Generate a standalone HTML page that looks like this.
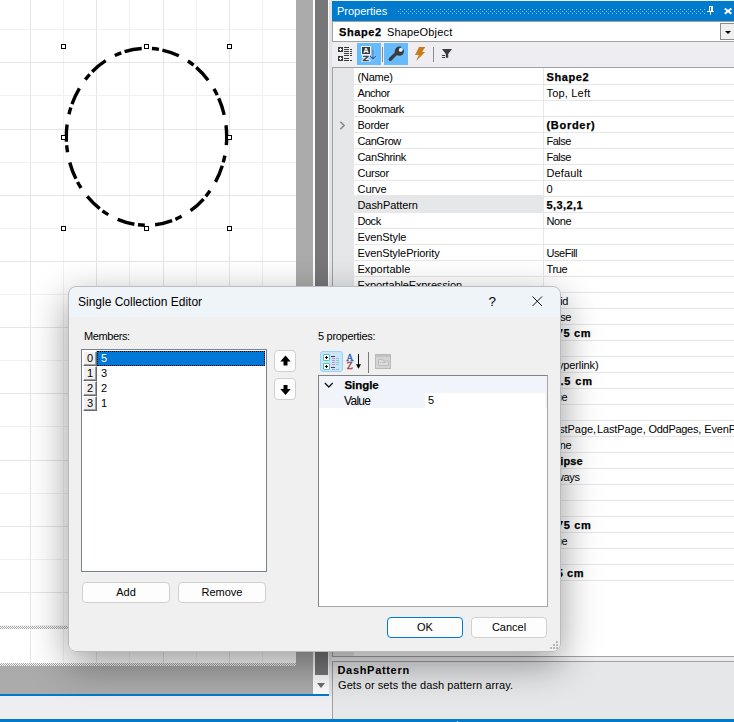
<!DOCTYPE html>
<html>
<head>
<meta charset="utf-8">
<title>Single Collection Editor</title>
<style>
html,body{margin:0;padding:0;}
body{width:734px;height:722px;overflow:hidden;position:relative;background:#eeeef2;font-family:"Liberation Sans",sans-serif;font-size:11px;color:#000;}
.abs{position:absolute;}
#page{left:0;top:0;width:296px;height:663px;background:#fff;overflow:hidden;}
#pageshadow{left:0;top:663px;width:296px;height:3px;background:#c9c9c9;}
#ws{left:0;top:0;width:313px;height:694px;background:#ababab;}
#vscroll{left:313px;top:0;width:16px;height:694px;background:#fcfcfc;}
#vstrip{left:329px;top:0;width:3px;height:696px;background:#e3e3e7;}
#vthumb{left:315px;top:0;width:13px;height:675px;background:#777779;}
#varrow{left:317px;top:683px;width:0;height:0;border-left:4.5px solid transparent;border-right:4.5px solid transparent;border-top:5px solid #6d6d6d;}
#blue1{left:0;top:694px;width:329px;height:2px;background:#007acc;}
#blue2{left:0;top:719px;width:734px;height:3px;background:#007acc;}
#status{left:0;top:696px;width:332px;height:23px;background:#eeeef2;}
/* properties */
#ptitle{left:332px;top:1px;width:402px;height:20px;background:#007acc;color:#fff;}
#ptitle span{position:absolute;left:5px;top:4px;line-height:13px;font-size:11px;}
#pcombo{left:332px;top:21px;width:403px;height:21px;background:#fff;border:1px solid #a0a0a0;box-sizing:border-box;}
#pcombo .t{position:absolute;left:6px;top:4px;line-height:13px;white-space:nowrap;}
#pdrop{left:387px;top:1px;width:15px;height:17px;background:#f0f0f0;border:1px solid #8c8c8c;box-sizing:border-box;}
#pdrop i{position:absolute;left:4px;top:7px;width:0;height:0;border-left:3px solid transparent;border-right:3px solid transparent;border-top:3.500px solid #000;}
#ptool{left:332px;top:42px;width:402px;height:25px;background:#eeeef2;}
.hl{position:absolute;top:1px;width:24px;height:22px;background:#66bbff;}
#pgrid{left:332px;top:67px;width:403px;height:590px;background:#fff;border:1px solid #a0a0a0;box-sizing:border-box;overflow:hidden;}
#gutter{left:0;top:0;width:21px;height:588px;background:#e6e7e8;}
.row{position:absolute;left:21px;width:400px;height:17px;border-bottom:1px solid #e6e7e8;box-sizing:border-box;}
.row .l{position:absolute;left:3.500px;top:2.500px;line-height:13px;white-space:nowrap;letter-spacing:-0.35px;}
.row .v{position:absolute;left:192.500px;top:3px;line-height:13px;white-space:nowrap;letter-spacing:-0.35px;}
.row.sel .lb{position:absolute;left:0;top:-1px;width:189px;height:17px;background:#e6e7e8;}
.b,b{font-weight:bold;-webkit-text-stroke:0.25px #000;}
#split{left:210px;top:0;width:1px;height:512px;background:#e6e7e8;}
#pdesc{left:332px;top:661px;width:403px;height:59px;background:#e6e7e8;border:1px solid #a0a0a0;box-sizing:border-box;}
#pdesc .h{position:absolute;left:4.500px;top:2px;letter-spacing:0.68px;line-height:13px;font-weight:bold;white-space:nowrap;}
#pdesc .d{position:absolute;left:5px;top:17px;letter-spacing:0.08px;line-height:13px;white-space:nowrap;}
/* dialog */
#dlgshadow{left:68px;top:286px;width:493px;height:366px;border-radius:8px;box-shadow:0 12px 38px rgba(0,0,0,0.40);}
#dlg{left:68px;top:286px;width:493px;height:366px;background:#f0f0f0;border-radius:8px;overflow:hidden;}
#dtitle{left:0;top:0;width:493px;height:31px;background:#eff4f9;}
#dtitle span{position:absolute;left:10px;top:9px;font-size:12px;line-height:15px;white-space:nowrap;}
.btn{position:absolute;box-sizing:border-box;background:#fdfdfd;border:1px solid #d0d0d0;border-radius:4px;text-align:center;font-size:11px;line-height:19px;}
.lbl{position:absolute;line-height:13px;white-space:nowrap;}
#list{left:13px;top:63px;width:186px;height:223px;background:#fff;border:1px solid #7a808c;box-sizing:border-box;}
.ib{position:absolute;left:1px;width:14px;height:15px;box-sizing:border-box;background:#f0f0f0;border-top:1px solid #fff;border-left:1px solid #fff;border-right:1px solid #696969;border-bottom:1px solid #696969;}
.ib i{position:absolute;left:0;top:0;width:11px;height:12px;border-right:1px solid #a0a0a0;border-bottom:1px solid #a0a0a0;}
.ib span{position:absolute;left:0;top:0;width:12px;text-align:center;line-height:13px;font-style:normal;}
.it{position:absolute;left:19px;line-height:13px;}
#selrow{left:15px;top:1px;width:168px;height:15px;background:#0078d7;box-sizing:border-box;border:1px dotted #000;}
#dgrid{left:250px;top:89px;width:230px;height:232px;background:#fff;border:1px solid #a5a5a5;border-top-color:#828282;border-left-color:#828282;box-sizing:border-box;}
</style>
</head>
<body>
<div id="ws" class="abs"></div>
<div id="page" class="abs">
<svg id="pagesvg" width="296" height="663" style="position:absolute;left:0;top:0">
<rect x="30" y="0" width="1" height="663" fill="#e6e6e6"/>
<rect x="63" y="0" width="1" height="663" fill="#f1f1f1"/>
<rect x="96" y="0" width="1" height="663" fill="#e6e6e6"/>
<rect x="129" y="0" width="1" height="663" fill="#f1f1f1"/>
<rect x="163" y="0" width="1" height="663" fill="#e6e6e6"/>
<rect x="196" y="0" width="1" height="663" fill="#f1f1f1"/>
<rect x="229" y="0" width="1" height="663" fill="#e6e6e6"/>
<rect x="262" y="0" width="1" height="663" fill="#f1f1f1"/>
<rect x="0" y="29" width="296" height="1" fill="#f1f1f1"/>
<rect x="0" y="62" width="296" height="1" fill="#e6e6e6"/>
<rect x="0" y="95" width="296" height="1" fill="#f1f1f1"/>
<rect x="0" y="129" width="296" height="1" fill="#e6e6e6"/>
<rect x="0" y="162" width="296" height="1" fill="#f1f1f1"/>
<rect x="0" y="195" width="296" height="1" fill="#e6e6e6"/>
<rect x="0" y="228" width="296" height="1" fill="#f1f1f1"/>
<rect x="0" y="261" width="296" height="1" fill="#e6e6e6"/>
<rect x="0" y="294" width="296" height="1" fill="#f1f1f1"/>
<rect x="0" y="327" width="296" height="1" fill="#e6e6e6"/>
<rect x="0" y="360" width="296" height="1" fill="#f1f1f1"/>
<rect x="0" y="393" width="296" height="1" fill="#e6e6e6"/>
<rect x="0" y="426" width="296" height="1" fill="#f1f1f1"/>
<rect x="0" y="460" width="296" height="1" fill="#e6e6e6"/>
<rect x="0" y="493" width="296" height="1" fill="#f1f1f1"/>
<rect x="0" y="526" width="296" height="1" fill="#e6e6e6"/>
<rect x="0" y="559" width="296" height="1" fill="#f1f1f1"/>
<rect x="0" y="592" width="296" height="1" fill="#e6e6e6"/>
<rect x="0" y="625" width="296" height="1" fill="#f1f1f1"/>
<ellipse cx="146.5" cy="136.8" rx="80.2" ry="88.5" fill="none" stroke="#000" stroke-width="3.4" pathLength="151.79" stroke-dasharray="2.44 3 2 1 5 3 2 1 5 3 2 1 5 3 2 1 5 3 2 1 5 3 2 1 5 3 2 1 5 3 2 1 5 3 2 1 5 3 2 1 5 3 2 1 5 3 2 1 5 3 2 1 5 3 3.35 0"/>
<rect x="61.5" y="44.5" width="4" height="4" fill="#fff" stroke="#000" stroke-width="1"/>
<rect x="144.5" y="44.5" width="4" height="4" fill="#fff" stroke="#000" stroke-width="1"/>
<rect x="227.5" y="44.5" width="4" height="4" fill="#fff" stroke="#000" stroke-width="1"/>
<rect x="61.5" y="135.5" width="4" height="4" fill="#fff" stroke="#000" stroke-width="1"/>
<rect x="227.5" y="135.5" width="4" height="4" fill="#fff" stroke="#000" stroke-width="1"/>
<rect x="61.5" y="226.5" width="4" height="4" fill="#fff" stroke="#000" stroke-width="1"/>
<rect x="144.5" y="226.5" width="4" height="4" fill="#fff" stroke="#000" stroke-width="1"/>
<rect x="227.5" y="226.5" width="4" height="4" fill="#fff" stroke="#000" stroke-width="1"/>
</svg>
</div>
<svg class="abs" style="left:0;top:0" width="296" height="670"><defs><pattern id="chk" x="0" y="0" width="2" height="2" patternUnits="userSpaceOnUse"><rect width="2" height="2" fill="#fbfbfb"/><rect x="0" y="0" width="1" height="1" fill="#a9a9a9"/><rect x="1" y="1" width="1" height="1" fill="#a9a9a9"/></pattern></defs><rect x="0" y="626" width="296" height="3" fill="url(#chk)"/><rect x="0" y="663" width="296" height="3" fill="url(#chk)"/></svg>
<div id="vscroll" class="abs"></div>
<div id="vthumb" class="abs"></div>
<div id="vstrip" class="abs"></div>
<div id="varrow" class="abs"></div>
<div id="status" class="abs"></div>
<div id="blue1" class="abs"></div>

<div id="ptitle" class="abs"><span>Properties</span>
<svg class="abs" style="left:0;top:0" width="402" height="20">
<defs><pattern id="dots" x="0" y="0" width="4" height="4" patternUnits="userSpaceOnUse"><rect x="0" y="0" width="1" height="1" fill="#86c3ee"/><rect x="2" y="2" width="1" height="1" fill="#86c3ee"/></pattern></defs>
<rect x="66" y="8" width="307" height="5" fill="url(#dots)"/>
<!-- pin -->
<g fill="#fff"><rect x="377" y="5" width="1" height="6"/><rect x="377" y="5" width="4" height="1"/><rect x="379" y="5" width="2" height="6"/><rect x="375" y="10" width="7" height="1"/><rect x="378" y="11" width="1" height="3"/></g>
<!-- close -->
<path d="M392.8 7.400l6.600 5.400M399.400 7.400l-6.600 5.400" stroke="#fff" stroke-width="1.900" fill="none"/>
</svg>
</div>
<div id="pcombo" class="abs"><span class="t"><b style="letter-spacing:0.6px">Shape2</b><span style="position:absolute;left:48px;top:0;letter-spacing:0.16px">ShapeObject</span></span><div id="pdrop" class="abs"><i></i></div></div>
<div id="ptool" class="abs">
<div class="hl" style="left:25px"></div>
<div class="hl" style="left:52px"></div>
<svg class="abs" style="left:0;top:0" width="402" height="25">
<!-- categorized icon -->
<g fill="#3b3b3b">
<rect x="6" y="5" width="5" height="5"/><rect x="6" y="14" width="5" height="5"/>
<rect x="12" y="5" width="5" height="1"/><rect x="12" y="7" width="5" height="1"/><rect x="12" y="9" width="5" height="1"/><rect x="12" y="11" width="5" height="1"/><rect x="12" y="13" width="5" height="1"/><rect x="12" y="16" width="5" height="1"/><rect x="12" y="18" width="5" height="1"/>
<rect x="18" y="7" width="2" height="1"/><rect x="18" y="9" width="2" height="1"/><rect x="18" y="11" width="2" height="1"/><rect x="18" y="13" width="2" height="1"/><rect x="18" y="18" width="2" height="1"/>
</g>
<g fill="#fff"><rect x="8" y="6" width="1" height="3"/><rect x="7" y="7" width="3" height="1"/><rect x="8" y="15" width="1" height="3"/><rect x="7" y="16" width="3" height="1"/></g>
<!-- AZ icon -->
<rect x="29" y="4" width="10" height="9" fill="#fff" opacity="0.85"/><rect x="30" y="5" width="8" height="7" fill="#3b3b3b"/>
<text x="34" y="11" font-size="7.500" font-weight="bold" fill="#fff" text-anchor="middle" font-family="Liberation Sans, sans-serif">A</text>
<text x="30.500" y="19" font-size="7.500" font-weight="bold" fill="none" stroke="#fff" stroke-opacity="0.85" stroke-width="2" textLength="6.500" lengthAdjust="spacingAndGlyphs" font-family="Liberation Sans, sans-serif">Z</text>
<text x="30.500" y="19" font-size="7.500" font-weight="bold" fill="#3b3b3b" stroke="#3b3b3b" stroke-width="0.300" textLength="6.500" lengthAdjust="spacingAndGlyphs" font-family="Liberation Sans, sans-serif">Z</text>
<path d="M41 7.500v9.500M38 13.800l3 3.400l3-3.400" stroke="#fff" stroke-opacity="0.5" stroke-width="2.600" fill="none"/><path d="M41 7.500v9.500M38 13.800l3 3.400l3-3.400" stroke="#1f5cb0" stroke-width="1.100" fill="none"/>
<rect x="50" y="5" width="1" height="15" fill="#8a8a8a"/>
<!-- wrench -->
<path d="M58.300 17.300L66 9.600" stroke="#3b3b3b" stroke-width="3.400" stroke-linecap="round" fill="none"/>
<circle cx="67.400" cy="9.200" r="4.600" fill="#3b3b3b"/>
<path d="M68.800 7.800L73 3.600" stroke="#66bbff" stroke-width="3" fill="none"/>
<circle cx="68.700" cy="7.900" r="1.900" fill="#e4f3ff"/>
<!-- lightning -->
<path d="M87 5h6.300l-3.200 4.900h3l-9 9.200l2.700-6.200h-3.800z" fill="#c97d1a"/>
<rect x="101" y="5" width="1" height="15" fill="#8a8a8a"/>
<!-- filter -->
<path d="M110 7h10l-3.800 4.900v3.900h-2.400v-3.900z" fill="#3b3b3b"/>
<rect x="110" y="13" width="3" height="1" fill="#3b3b3b"/><rect x="110" y="15" width="3" height="1" fill="#3b3b3b"/>
</svg>
</div>
<div id="pgrid" class="abs">
<div id="gutter" class="abs"></div>
<div id="split" class="abs"></div>
<svg class="abs" style="left:6px;top:52px" width="8" height="12"><path d="M1.300 1.800L5.100 5.500L1.300 9.200" stroke="#868686" stroke-width="1.500" fill="none"/></svg>
<div class="row" style="top:0px"><span class="l" style="letter-spacing:-0.24px">(Name)</span><span class="v b" style="letter-spacing:0.58px">Shape2</span></div>
<div class="row" style="top:16px"><span class="l" style="letter-spacing:-0.46px">Anchor</span><span class="v" style="letter-spacing:0.19px">Top, Left</span></div>
<div class="row" style="top:32px"><span class="l" style="letter-spacing:-0.39px">Bookmark</span></div>
<div class="row" style="top:48px"><span class="l" style="letter-spacing:-0.28px">Border</span><span class="v b" style="letter-spacing:0.7px">(Border)</span></div>
<div class="row" style="top:64px"><span class="l" style="letter-spacing:-0.45px">CanGrow</span><span class="v" style="letter-spacing:-0.53px">False</span></div>
<div class="row" style="top:80px"><span class="l" style="letter-spacing:-0.33px">CanShrink</span><span class="v" style="letter-spacing:-0.53px">False</span></div>
<div class="row" style="top:96px"><span class="l" style="letter-spacing:-0.28px">Cursor</span><span class="v" style="letter-spacing:0.13px">Default</span></div>
<div class="row" style="top:112px"><span class="l" style="letter-spacing:-0.05px">Curve</span><span class="v" style="letter-spacing:-0.2px">0</span></div>
<div class="row sel" style="top:128px"><div class="lb"></div><span class="l" style="letter-spacing:-0.07px">DashPattern</span><span class="v b" style="letter-spacing:0.42px">5,3,2,1</span></div>
<div class="row" style="top:144px"><span class="l" style="letter-spacing:-0.47px">Dock</span><span class="v" style="letter-spacing:-0.37px">None</span></div>
<div class="row" style="top:160px"><span class="l" style="letter-spacing:-0.08px">EvenStyle</span></div>
<div class="row" style="top:176px"><span class="l" style="letter-spacing:-0.1px">EvenStylePriority</span><span class="v" style="letter-spacing:-0.43px">UseFill</span></div>
<div class="row" style="top:192px"><span class="l" style="letter-spacing:0.02px">Exportable</span><span class="v" style="letter-spacing:-0.37px">True</span></div>
<div class="row" style="top:208px"><span class="l" style="letter-spacing:-0.13px">ExportableExpression</span></div>
<div class="row" style="top:224px"><span class="l" style="letter-spacing:-0.2px">Fill</span><span class="v" style="letter-spacing:-0.4px;margin-left:-1px">Solid</span></div>
<div class="row" style="top:240px"><span class="l" style="letter-spacing:-0.2px">GrowToBottom</span><span class="v" style="letter-spacing:-0.53px">False</span></div>
<div class="row" style="top:256px"><span class="l" style="letter-spacing:-0.2px">Height</span><span class="v b" style="letter-spacing:0.6px">2.75 cm</span></div>
<div class="row" style="top:272px"><span class="l" style="letter-spacing:-0.2px">HoverStyle</span></div>
<div class="row" style="top:288px"><span class="l" style="letter-spacing:-0.2px">Hyperlink</span><span class="v" style="letter-spacing:-0.11px">(Hyperlink)</span></div>
<div class="row" style="top:304px"><span class="l" style="letter-spacing:-0.2px">Left</span><span class="v b" style="letter-spacing:0.85px">12.5 cm</span></div>
<div class="row" style="top:320px"><span class="l" style="letter-spacing:-0.2px">Printable</span><span class="v" style="letter-spacing:-0.37px">True</span></div>
<div class="row" style="top:336px"><span class="l" style="letter-spacing:-0.2px">PrintableExpression</span></div>
<div class="row" style="top:352px"><span class="l" style="letter-spacing:-0.2px">PrintOn</span><span class="v" style="letter-spacing:-0.2px"><span style="letter-spacing:-0.06px">FirstPage,</span><span style="position:absolute;left:50.400px;top:0;letter-spacing:-0.09px">LastPage,</span><span style="position:absolute;left:102px;top:0;letter-spacing:-0.29px">OddPages,</span><span style="position:absolute;left:157.700px;top:0;letter-spacing:-0.1px">EvenPages, RepeatedBand, SinglePage</span></span></div>
<div class="row" style="top:368px"><span class="l" style="letter-spacing:-0.2px">Restrictions</span><span class="v" style="letter-spacing:-0.37px">None</span></div>
<div class="row" style="top:384px"><span class="l" style="letter-spacing:-0.2px">Shape</span><span class="v b" style="letter-spacing:0.13px">Ellipse</span></div>
<div class="row" style="top:400px"><span class="l" style="letter-spacing:-0.2px">ShiftMode</span><span class="v" style="letter-spacing:-0.28px">Always</span></div>
<div class="row" style="top:416px"><span class="l" style="letter-spacing:-0.2px">Style</span></div>
<div class="row" style="top:432px"><span class="l" style="letter-spacing:-0.2px">Tag</span></div>
<div class="row" style="top:448px"><span class="l" style="letter-spacing:-0.2px">Top</span><span class="v b" style="letter-spacing:0.65px">0.75 cm</span></div>
<div class="row" style="top:464px"><span class="l" style="letter-spacing:-0.2px">Visible</span><span class="v" style="letter-spacing:-0.37px">True</span></div>
<div class="row" style="top:480px"><span class="l" style="letter-spacing:-0.2px">VisibleExpression</span></div>
<div class="row" style="top:496px"><span class="l" style="letter-spacing:-0.2px">Width</span><span class="v b" style="letter-spacing:0.56px">2.5 cm</span></div>
</div>
<div id="pdesc" class="abs"><span class="h">DashPattern</span><span class="d">Gets or sets the dash pattern array.</span></div>
<div id="blue2" class="abs"></div>
<div class="abs" style="left:457px;top:721px;width:1px;height:1px;background:#cfe6f7"></div>

<div id="dlgshadow" class="abs"></div>
<div id="dlg" class="abs">
<div id="dtitle" class="abs"><span>Single Collection Editor</span>
<svg class="abs" style="left:0;top:0" width="492" height="31">
<text x="424.200" y="20" font-size="13.500" text-anchor="middle" fill="#000" font-family="Liberation Sans, sans-serif">?</text>
<path d="M464.5 10.5l9.5 9.5M474 10.5l-9.5 9.5" stroke="#111" stroke-width="1" fill="none"/>
</svg>
</div>
<span class="lbl" style="left:16px;top:44px;letter-spacing:-0.4px">Members:</span>
<div id="list" class="abs">
<div id="selrow" class="abs"></div>
<div class="ib" style="top:1px"><i></i><span>0</span></div>
<div class="ib" style="top:16px"><i></i><span>1</span></div>
<div class="ib" style="top:31px"><i></i><span>2</span></div>
<div class="ib" style="top:46px"><i></i><span>3</span></div>
<span class="it" style="top:2px;color:#fff">5</span>
<span class="it" style="top:17px">3</span>
<span class="it" style="top:32px">2</span>
<span class="it" style="top:47px">1</span>
</div>
<div class="btn" style="left:206px;top:64px;width:22px;height:22px"><svg width="20" height="20" style="position:absolute;left:0;top:0"><path d="M10.5 4.5l5.2 6h-3.2v4h-4v-4h-3.2z" fill="#000"/></svg></div>
<div class="btn" style="left:206px;top:92px;width:22px;height:22px"><svg width="20" height="20" style="position:absolute;left:0;top:0"><path d="M10.5 16l5.2-6h-3.2v-4h-4v4h-3.2z" fill="#000"/></svg></div>
<div class="btn" style="left:14px;top:296px;width:88px;height:21px">Add</div>
<div class="btn" style="left:110px;top:296px;width:88px;height:21px">Remove</div>
<span class="lbl" style="left:250px;top:44px;letter-spacing:-0.3px">5 properties:</span>
<!-- dialog property grid toolbar -->
<div class="abs" style="left:252px;top:65px;width:23px;height:21px;box-sizing:border-box;background:#cce4f7;border:1px solid #99d1ff;border-radius:3px"></div>
<svg class="abs" style="left:250px;top:62px" width="90" height="27">
<g fill="#fff" stroke="#58c3b5" stroke-width="1"><rect x="5.500" y="6.500" width="6" height="6" rx="0.500"/><rect x="5.500" y="15.500" width="6" height="6" rx="0.500"/></g>
<g fill="#000"><rect x="7" y="9" width="3" height="1"/><rect x="8" y="8" width="1" height="3"/><rect x="7" y="18" width="3" height="1"/><rect x="8" y="17" width="1" height="3"/></g>
<rect x="13" y="8" width="4" height="1" fill="#444"/><rect x="13" y="19" width="4" height="1" fill="#444"/>
<g fill="#b596d8"><rect x="14" y="10" width="3" height="1"/><rect x="14" y="12" width="3" height="1"/><rect x="14" y="14" width="3" height="1"/><rect x="14" y="16" width="3" height="1"/><rect x="14" y="21" width="3" height="1"/></g>
<g fill="#7fd0c2"><rect x="18" y="10" width="3" height="1"/><rect x="18" y="12" width="3" height="1"/><rect x="18" y="14" width="3" height="1"/><rect x="18" y="16" width="3" height="1"/><rect x="18" y="21" width="3" height="1"/></g>
<text x="31.800" y="12.600" font-size="10" text-anchor="middle" fill="#2d5fb4" stroke="#2d5fb4" stroke-width="0.3" font-family="Liberation Serif, serif">A</text>
<text x="31.800" y="20.800" font-size="10" text-anchor="middle" fill="#9c3d4a" stroke="#9c3d4a" stroke-width="0.3" font-family="Liberation Serif, serif">Z</text>
<rect x="40" y="6" width="1" height="12" fill="#000"/><path d="M38 16.300h5l-2.500 4.400z" fill="#000"/>
<rect x="50" y="4" width="1" height="21" fill="#7a7a7a"/>
<rect x="57.500" y="6.500" width="15" height="14" fill="#d4d4d4" stroke="#b9b9b9" stroke-width="1"/>
<rect x="58" y="7" width="14" height="2" fill="#c2c2c2"/>
<path d="M60.500 17.500v-6h4l1 1.500h5v4.500z" fill="#dcdcdc" stroke="#bdbdbd" stroke-width="1"/>
<rect x="62" y="14" width="1" height="1" fill="#b0b0b0"/><rect x="64" y="14" width="4" height="1" fill="#b8b8b8"/>
</svg>
<div id="dgrid" class="abs">
<div class="abs" style="left:0;top:0;width:228px;height:32px;background:#f1f5fb"></div>
<div class="abs" style="left:106px;top:17px;width:120px;height:15px;background:#fff"></div>
<svg class="abs" style="left:5px;top:6px" width="11" height="8"><path d="M0.900 1L4.800 4.900L8.700 1" stroke="#1a1a1a" stroke-width="1.400" fill="none"/></svg>
<span class="lbl b" style="left:25.500px;top:3px;font-size:11.500px;letter-spacing:-0.05px">Single</span>
<span class="lbl" style="left:25px;top:18.500px;font-size:12px;letter-spacing:-0.7px">Value</span>
<span class="lbl" style="left:109px;top:18px">5</span>
</div>
<div class="btn" style="left:319px;top:331px;width:76px;height:21px;border:1.500px solid #0078d4;line-height:18px">OK</div>
<div class="btn" style="left:403px;top:331px;width:76px;height:21px">Cancel</div>
<svg class="abs" style="left:482px;top:355px" width="9" height="9"><g fill="#b8b8b8"><rect x="6" y="0" width="2" height="2"/><rect x="3" y="3" width="2" height="2"/><rect x="6" y="3" width="2" height="2"/><rect x="0" y="6" width="2" height="2"/><rect x="3" y="6" width="2" height="2"/><rect x="6" y="6" width="2" height="2"/></g></svg>
</div>
<div class="abs" style="left:68px;top:286px;width:493px;height:366px;box-sizing:border-box;border:1px solid rgba(0,0,0,0.22);border-radius:8px"></div>
</body>
</html>
